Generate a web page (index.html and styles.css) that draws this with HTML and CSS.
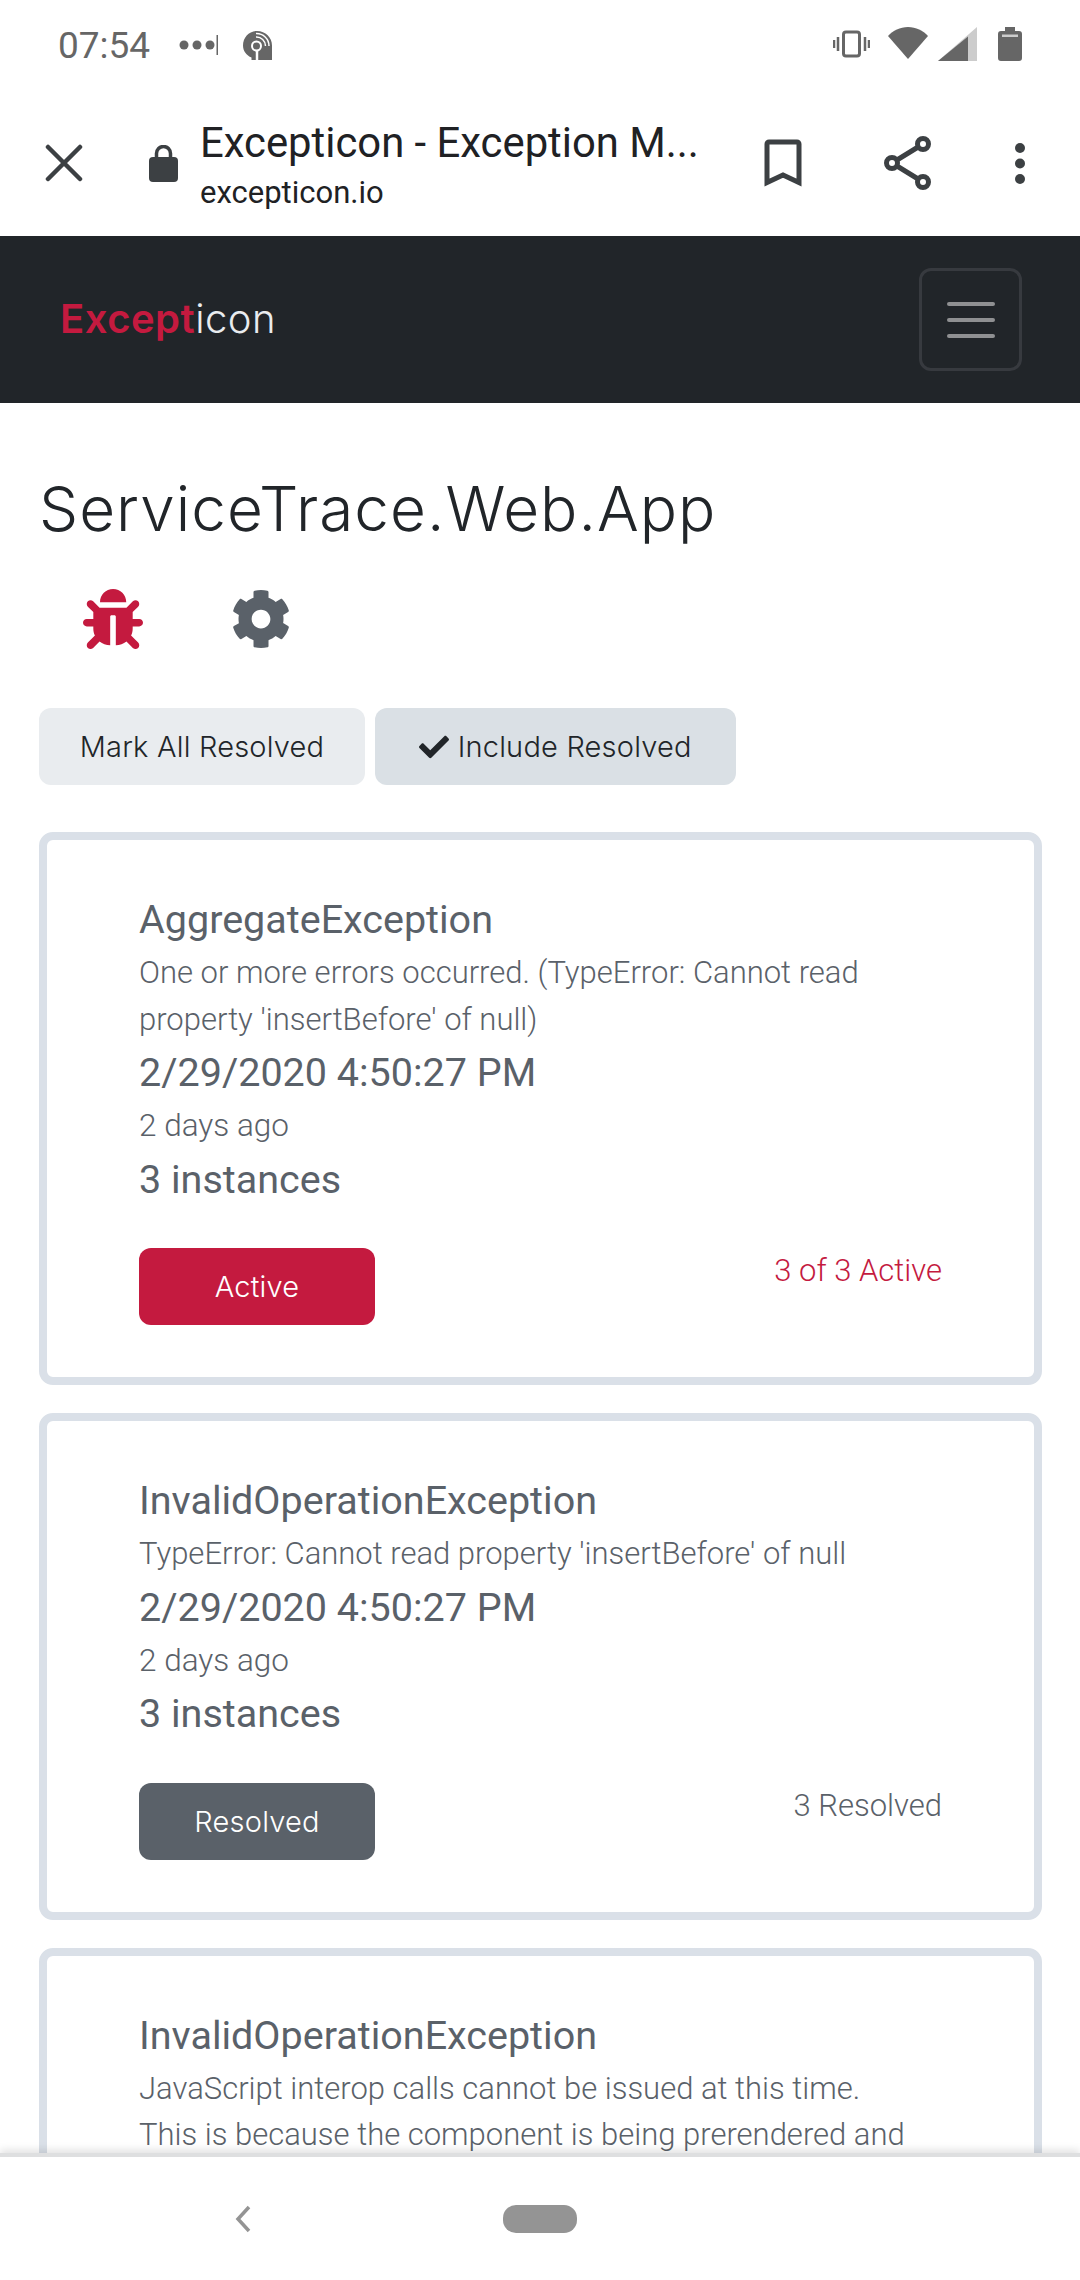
FILE: index.html
```html
<!DOCTYPE html>
<html lang="en">
<head>
    <meta charset="utf-8">
    <title>Excepticon - Exception Monitoring</title>
    <link rel="stylesheet" href="styles.css">
</head>
<body>
    <div class="phone">
        <div class="statusbar">
            <div class="status-left">
                <span class="clock">07:54</span>
                <svg class="dots" viewBox="0 0 39 20"><circle cx="5" cy="10" r="4.500"/><circle cx="18" cy="10" r="4.500"/><circle cx="31" cy="10" r="4.500"/><rect x="37.500" y="0" width="1.500" height="20"/></svg>
                <svg class="podcast" viewBox="0 0 29 29">
                    <path d="M14 0c8.500 0 15 6.500 15 14.500V29H8.500v-2.500C3.500 24.500 0 20 0 14.500 0 6.500 6 0 14 0z"/>
                    <circle cx="13.500" cy="15" r="4.500" fill="none" stroke="#fff" stroke-width="2"/>
                    <path d="M13 6A9 9 0 0 1 22.500 15M13 2.500A12.500 12.500 0 0 1 26 15" fill="none" stroke="#fff" stroke-width="1.500"/>
                    <path d="M14 20v9" stroke="#fff" stroke-width="2.500"/>
                </svg>
            </div>
            <div class="status-right">
                <svg class="vibrate" viewBox="0 0 37 34"><rect x="10.500" y="5" width="16" height="24" rx="2.500" fill="none" stroke="#666" stroke-width="3"/><path d="M5 10v14M1 13v8M32 10v14M36 13v8" stroke="#666" stroke-width="2.500"/></svg>
                <svg class="wifi" viewBox="0 0 40 34"><path d="M20 32 0 9C5 3.500 12 0 20 0s15 3.500 20 9z"/></svg>
                <svg class="signal" viewBox="0 0 39 34"><path fill="#ccc" d="M39 0v34H0z"/><path d="M30 9.500V34H0z"/></svg>
                <svg class="battery" viewBox="0 0 24 34"><path d="M7 0h10v4h4a3 3 0 0 1 3 3v24a3 3 0 0 1-3 3H3a3 3 0 0 1-3-3V7a3 3 0 0 1 3-3h4z"/><rect x="4" y="7.500" width="16" height="2.500" fill="#ccc"/></svg>
            </div>
        </div>

        <div class="toolbar">
            <svg class="tool-close" viewBox="0 0 38 38"><path d="M3 3l32 32M35 3 3 35" stroke="#3c4043" stroke-width="4.500" stroke-linecap="round" fill="none"/></svg>
            <svg class="tool-lock" viewBox="0 0 29 37"><rect x="0" y="12" width="29" height="25" rx="4"/><path d="M7.500 14V8.500a7 7 0 0 1 14 0V14" fill="none" stroke="#3c4043" stroke-width="3.500"/></svg>
            <div class="tool-title">
                <div class="page-title">Excepticon - Exception M...</div>
                <div class="page-url">excepticon.io</div>
            </div>
            <svg class="tool-bookmark" viewBox="0 0 38 48"><path d="M3 43.500V5a2 2 0 0 1 2-2h28a2 2 0 0 1 2 2v38.500L19 36z" fill="none" stroke="#3c4043" stroke-width="5"/></svg>
            <svg class="tool-share" viewBox="0 0 47 54"><path d="M39 8 8 27l31 19" fill="none" stroke="#3c4043" stroke-width="5"/><circle cx="39" cy="8" r="5.500" fill="#fff" stroke="#3c4043" stroke-width="5"/><circle cx="8" cy="27" r="5.500" fill="#fff" stroke="#3c4043" stroke-width="5"/><circle cx="39" cy="46" r="5.500" fill="#fff" stroke="#3c4043" stroke-width="5"/></svg>
            <svg class="tool-more" viewBox="0 0 12 42"><circle cx="6" cy="6" r="5"/><circle cx="6" cy="21.500" r="5"/><circle cx="6" cy="37" r="5"/></svg>
        </div>

        <nav class="navbar">
            <a class="brand"><span class="brand-red">Except</span>icon</a>
            <button class="toggler">
                <span class="toggler-bar"></span>
                <span class="toggler-bar"></span>
                <span class="toggler-bar"></span>
            </button>
        </nav>

        <main class="content">
            <h1>ServiceTrace.Web.App</h1>
            <div class="tabs">
                <svg class="tab-bug" viewBox="0 0 512 512"><path d="M511.988 288.9c-.478 17.43-15.217 31.1-32.653 31.1H424v16c0 21.864-4.882 42.584-13.6 61.145l60.228 60.228c12.496 12.497 12.496 32.758 0 45.255-12.498 12.497-32.759 12.496-45.256 0l-54.736-54.736C345.886 467.965 314.351 480 280 480V236c0-6.627-5.373-12-12-12h-24c-6.627 0-12 5.373-12 12v244c-34.351 0-65.886-12.035-90.636-32.108l-54.736 54.736c-12.498 12.497-32.759 12.496-45.256 0-12.496-12.497-12.496-32.758 0-45.255l60.228-60.228C92.882 378.584 88 357.864 88 336v-16H32.666C15.23 320 .491 306.33.013 288.9-.484 270.816 14.028 256 32 256h56v-58.745l-46.628-46.628c-12.496-12.497-12.496-32.758 0-45.255 12.498-12.497 32.758-12.497 45.256 0L141.255 160h229.489l54.627-54.627c12.498-12.497 32.758-12.497 45.256 0 12.496 12.497 12.496 32.758 0 45.255L424 197.255V256h56c17.972 0 32.484 14.816 31.988 32.9zM257 0c-61.856 0-112 50.144-112 112h224C369 50.144 318.856 0 257 0z"/></svg>
                <svg class="tab-cog" viewBox="0 0 512 512"><path d="M487.4 315.7l-42.6-24.6c4.3-23.2 4.3-47 0-70.2l42.6-24.6c4.9-2.8 7.1-8.6 5.5-14-11.1-35.6-30-67.8-54.7-94.6-3.8-4.1-10-5.1-14.8-2.3L380.8 110c-17.9-15.4-38.5-27.3-60.8-35.1V25.8c0-5.6-3.9-10.5-9.4-11.7-36.7-8.2-74.3-7.8-109.2 0-5.5 1.2-9.4 6.1-9.4 11.7V75c-22.2 7.9-42.8 19.8-60.8 35.1L88.7 85.5c-4.9-2.8-11-1.9-14.8 2.3-24.7 26.7-43.6 58.9-54.7 94.6-1.7 5.4.6 11.2 5.5 14L67.3 221c-4.3 23.2-4.3 47 0 70.2l-42.6 24.6c-4.9 2.8-7.1 8.6-5.5 14 11.1 35.6 30 67.8 54.7 94.6 3.8 4.1 10 5.1 14.8 2.3l42.6-24.6c17.9 15.4 38.5 27.3 60.8 35.1v49.2c0 5.6 3.9 10.5 9.4 11.7 36.7 8.2 74.3 7.8 109.2 0 5.5-1.2 9.4-6.1 9.4-11.7v-49.2c22.2-7.9 42.8-19.8 60.8-35.1l42.6 24.6c4.9 2.8 11 1.9 14.8-2.3 24.7-26.7 43.6-58.9 54.7-94.6 1.5-5.5-.7-11.3-5.6-14.1zM256 336c-44.1 0-80-35.9-80-80s35.9-80 80-80 80 35.9 80 80-35.9 80-80 80z"/></svg>
            </div>
            <div class="actions">
                <button class="btn btn-light">Mark All Resolved</button>
                <button class="btn btn-toggled">
                    <svg class="check" viewBox="0 0 512 512"><path d="M173.898 439.404l-166.4-166.4c-9.997-9.997-9.997-26.206 0-36.204l36.203-36.204c9.997-9.998 26.207-9.998 36.204 0L192 312.69 432.095 72.596c9.997-9.997 26.207-9.997 36.204 0l36.203 36.204c9.997 9.997 9.997 26.206 0 36.204l-294.4 294.401c-9.998 9.997-26.207 9.997-36.204-.001z"/></svg>
                    Include Resolved
                </button>
            </div>

            <section class="card">
                <div class="card-title">AggregateException</div>
                <p class="card-message">One or more errors occurred. (TypeError: Cannot read property 'insertBefore' of null)</p>
                <div class="card-title">2/29/2020 4:50:27 PM</div>
                <div class="card-ago">2 days ago</div>
                <div class="card-title">3 instances</div>
                <div class="card-footer">
                    <button class="btn btn-status btn-active">Active</button>
                    <span class="count count-active">3 of 3 Active</span>
                </div>
            </section>

            <section class="card">
                <div class="card-title">InvalidOperationException</div>
                <p class="card-message">TypeError: Cannot read property 'insertBefore' of null</p>
                <div class="card-title">2/29/2020 4:50:27 PM</div>
                <div class="card-ago">2 days ago</div>
                <div class="card-title">3 instances</div>
                <div class="card-footer">
                    <button class="btn btn-status btn-resolved">Resolved</button>
                    <span class="count">3 Resolved</span>
                </div>
            </section>

            <section class="card">
                <div class="card-title">InvalidOperationException</div>
                <p class="card-message">JavaScript interop calls cannot be issued at this time. This is because the component is being prerendered and</p>
            </section>
        </main>

        <div class="bottom-nav">
            <svg class="nav-back" viewBox="0 0 16 28"><path d="M14 2 3 14l11 12" fill="none" stroke="#949494" stroke-width="3.500"/></svg>
            <span class="nav-home"></span>
        </div>
    </div>
</body>
</html>
```

FILE: styles.css
```css
* {
    box-sizing: border-box;
}

html, body {
    margin: 0;
    padding: 0;
}

body {
    font-family: "Roboto", sans-serif;
    background: #fff;
}

.phone {
    width: 1080px;
    height: 2280px;
    display: flex;
    flex-direction: column;
    overflow: hidden;
}

/* Android status bar */
.statusbar {
    height: 90px;
    flex: none;
    display: flex;
    justify-content: space-between;
    align-items: center;
    padding: 0 58px 2px 58px;
    fill: #666;
}

.status-left, .status-right {
    display: flex;
    align-items: center;
}

.status-left {
    margin-top: 2px;
}

.clock {
    font-size: 37px;
    color: #666;
    width: 121px;
}

.dots {
    width: 39px;
    height: 20px;
}

.podcast {
    width: 29px;
    height: 29px;
    margin-left: 25px;
}

.vibrate {
    width: 37px;
    height: 34px;
}

.wifi {
    width: 40px;
    height: 34px;
    margin-left: 18px;
}

.signal {
    width: 39px;
    height: 34px;
    margin-left: 10px;
}

.battery {
    width: 24px;
    height: 34px;
    margin-left: 21px;
}

/* Custom tab toolbar */
.toolbar {
    height: 146px;
    flex: none;
    display: flex;
    align-items: center;
    fill: #3c4043;
}

.tool-close {
    width: 38px;
    height: 38px;
    margin-left: 45px;
}

.tool-lock {
    width: 29px;
    height: 37px;
    margin-left: 66px;
}

.tool-title {
    width: 540px;
    margin-left: 22px;
    padding-top: 9px;
    color: #202124;
}

.page-title {
    font-size: 41.800px;
    line-height: 50px;
    white-space: nowrap;
}

.page-url {
    font-size: 31px;
    line-height: 49px;
}

.tool-bookmark {
    width: 38px;
    height: 48px;
    margin-left: 24px;
}

.tool-share {
    width: 47px;
    height: 54px;
    margin-left: 82px;
}

.tool-more {
    width: 12px;
    height: 42px;
    margin-left: 83px;
}

/* Site navbar */
.navbar {
    height: 167px;
    flex: none;
    background: #212529;
    display: flex;
    align-items: center;
    justify-content: space-between;
    padding: 0 58px 0 60px;
}

.brand {
    font-family: "Inter", sans-serif;
    font-size: 40px;
    letter-spacing: 0.5px;
    color: #e9ecef;
    font-weight: 300;
    margin-bottom: 2px;
}

.brand-red {
    color: #c41a3f;
    font-weight: 600;
}

.toggler {
    width: 103px;
    height: 103px;
    padding: 0;
    background: none;
    border: 3px solid #373a3f;
    border-radius: 12px;
    display: flex;
    flex-direction: column;
    align-items: center;
    justify-content: center;
    gap: 12px;
}

.toggler-bar {
    width: 48px;
    height: 4px;
    border-radius: 2px;
    background: #8f9092;
}

/* Page content */
.content {
    flex: 1;
    min-height: 0;
    overflow: hidden;
    padding: 70px 38px 0 39px;
}

h1 {
    font-family: "Inter", sans-serif;
    font-weight: 300;
    font-size: 62px;
    letter-spacing: 1px;
    line-height: 72px;
    margin: 0;
    color: #212529;
}

.tabs {
    display: flex;
    align-items: center;
    height: 60px;
    margin-top: 44px;
}

.tab-bug {
    width: 60px;
    height: 60px;
    margin-left: 44px;
    fill: #c41a3f;
}

.tab-cog {
    width: 60px;
    height: 60px;
    margin-left: 88px;
    fill: #5a6169;
}

.actions {
    display: flex;
    gap: 10px;
    margin-top: 59px;
}

.btn {
    height: 77px;
    border: none;
    border-radius: 12px;
    font-family: "Inter", sans-serif;
    font-weight: 300;
    font-size: 29px;
    letter-spacing: 0.2px;
    color: #212529;
    padding: 0;
}

.btn-light {
    width: 326px;
    background: #e9ecef;
}

.btn-toggled {
    width: 361px;
    background: #dae0e5;
}

.check {
    width: 30px;
    height: 30px;
    vertical-align: -5px;
    fill: #212529;
}

/* Exception cards */
.card {
    border: 8px solid #dae0e8;
    border-radius: 14px;
    padding: 50px 92px 52px 92px;
    margin-top: 47px;
    color: #5a6169;
}

.card + .card {
    margin-top: 28px;
}

.card-title {
    font-size: 39.500px;
    line-height: 60px;
}

.card-message {
    font-size: 31px;
    line-height: 46.500px;
    font-weight: 300;
    max-width: 780px;
    margin: 0;
}

.card-ago {
    font-size: 31.500px;
    line-height: 46.500px;
    font-weight: 300;
}

.card-footer {
    display: flex;
    justify-content: space-between;
    align-items: flex-start;
    margin-top: 38.500px;
}

.btn-status {
    width: 236px;
    color: #fff;
}

.btn-active {
    background: #c41a3f;
}

.btn-resolved {
    background: #5a6169;
}

.count {
    font-size: 31px;
    font-weight: 300;
    line-height: 46px;
}

.count-active {
    color: #c41a3f;
}

/* Android nav bar */
.bottom-nav {
    height: 127px;
    flex: none;
    background: #fff;
    border-top: 4px solid #dedfe0;
    display: flex;
    align-items: center;
    box-shadow: 0 -3px 8px rgba(0, 0, 0, 0.12);
}

.nav-back {
    width: 16px;
    height: 28px;
    margin-left: 235px;
}

.nav-home {
    width: 74px;
    height: 28px;
    border-radius: 13px;
    background: #949494;
    margin-left: 252px;
}
```
